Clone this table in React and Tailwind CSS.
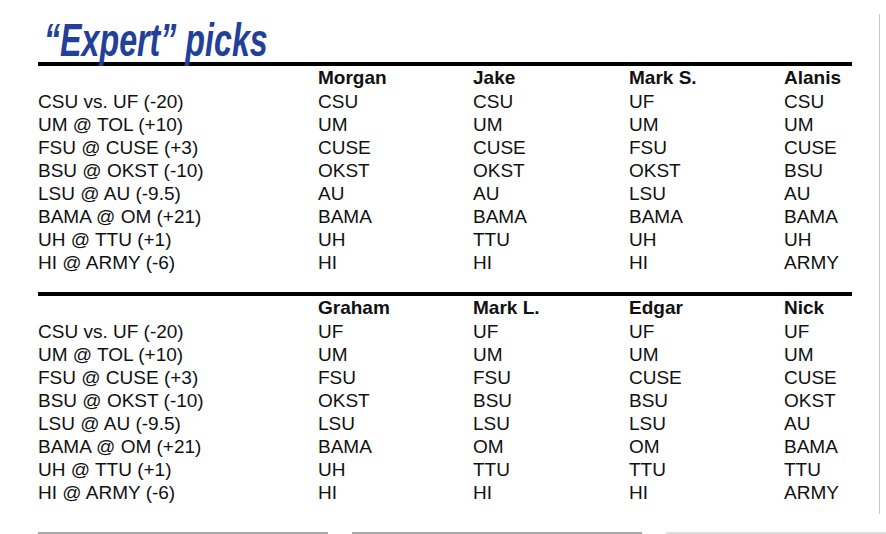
const players1 = ["Morgan", "Jake", "Mark S.", "Alanis"];
const players2 = ["Graham", "Mark L.", "Edgar", "Nick"];

const games = [
  "CSU vs. UF (-20)",
  "UM @ TOL (+10)",
  "FSU @ CUSE (+3)",
  "BSU @ OKST (-10)",
  "LSU @ AU (-9.5)",
  "BAMA @ OM (+21)",
  "UH @ TTU (+1)",
  "HI @ ARMY (-6)",
];

const picks1 = [
  ["CSU", "CSU", "UF", "CSU"],
  ["UM", "UM", "UM", "UM"],
  ["CUSE", "CUSE", "FSU", "CUSE"],
  ["OKST", "OKST", "OKST", "BSU"],
  ["AU", "AU", "LSU", "AU"],
  ["BAMA", "BAMA", "BAMA", "BAMA"],
  ["UH", "TTU", "UH", "UH"],
  ["HI", "HI", "HI", "ARMY"],
];

const picks2 = [
  ["UF", "UF", "UF", "UF"],
  ["UM", "UM", "UM", "UM"],
  ["FSU", "FSU", "CUSE", "CUSE"],
  ["OKST", "BSU", "BSU", "OKST"],
  ["LSU", "LSU", "LSU", "AU"],
  ["BAMA", "OM", "OM", "BAMA"],
  ["UH", "TTU", "TTU", "TTU"],
  ["HI", "HI", "HI", "ARMY"],
];

function PicksTable({ players, picks }) {
  return (
    <div>
      <div className="h-[4px] bg-black" />
      <div className="grid grid-cols-[280px_155px_156px_155px_1fr] h-[24px] leading-[24px] font-bold">
        <div />
        {players.map((p) => (
          <div key={p}>{p}</div>
        ))}
      </div>
      {games.map((g, i) => (
        <div
          key={g}
          className="grid grid-cols-[280px_155px_156px_155px_1fr] h-[23px] leading-[23px]"
        >
          <div>{g}</div>
          {picks[i].map((p, j) => (
            <div key={j}>{p}</div>
          ))}
        </div>
      ))}
    </div>
  );
}

export default function App() {
  return (
    <div className="w-[886px] h-[534px] bg-white overflow-hidden relative font-['Liberation_Sans',Arial,sans-serif] text-[19px] text-[#111]">
      <div className="absolute left-[879px] top-[14px] w-[1px] h-[500px] bg-[#c8c8c8]" />
      <div className="pl-[38px] w-[852px] pt-[18px]">
        <h1 className="h-[44px] leading-[44px] text-[46px] font-bold italic text-[#22409a] ml-[6px] origin-left scale-x-[0.7] whitespace-nowrap">
          “Expert” picks
        </h1>
        <PicksTable players={players1} picks={picks1} />
        <div className="h-[18px]" />
        <PicksTable players={players2} picks={picks2} />
      </div>
      <div className="flex gap-[24px] pl-[38px] mt-[28px]">
        <div className="w-[290px] h-[2px] bg-[#a8a8a8]" />
        <div className="w-[290px] h-[2px] bg-[#a8a8a8]" />
        <div className="w-[220px] h-[2px] bg-[#dedede]" />
      </div>
    </div>
  );
}
